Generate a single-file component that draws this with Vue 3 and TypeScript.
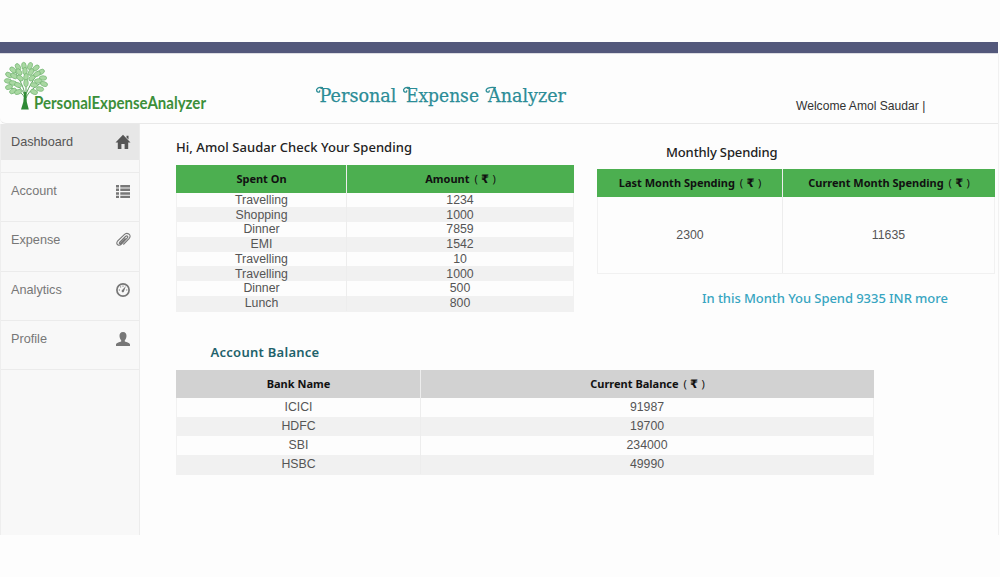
<script setup lang="ts">
interface Row {
  name: string
  value: number
}

const menu: { label: string; icon: string }[] = [
  { label: 'Dashboard', icon: 'home' },
  { label: 'Account', icon: 'list' },
  { label: 'Expense', icon: 'clip' },
  { label: 'Analytics', icon: 'gauge' },
  { label: 'Profile', icon: 'user' },
]

const spending: Row[] = [
  { name: 'Travelling', value: 1234 },
  { name: 'Shopping', value: 1000 },
  { name: 'Dinner', value: 7859 },
  { name: 'EMI', value: 1542 },
  { name: 'Travelling', value: 10 },
  { name: 'Travelling', value: 1000 },
  { name: 'Dinner', value: 500 },
  { name: 'Lunch', value: 800 },
]

const balances: Row[] = [
  { name: 'ICICI', value: 91987 },
  { name: 'HDFC', value: 19700 },
  { name: 'SBI', value: 234000 },
  { name: 'HSBC', value: 49990 },
]

// Leaves of the logo tree: x, y, rotation
const leaves: number[][] = [
  [8, 23, 10], [9, 17, 30], [13, 12, 40], [18, 9, 60], [24, 8, 80], [30, 8, 110], [36, 10, 140],
  [41, 14, 150], [43, 20, 0], [44, 26, 20], [40, 31, 10], [9, 29, 160], [13, 33, 150], [14, 18, 30],
  [13, 25, 10], [19, 14, 50], [20, 20, 40], [25, 13, 90], [26, 19, 100], [31, 14, 120], [32, 20, 140],
  [37, 16, 150], [38, 23, 170], [34, 27, 10], [18, 27, 20], [34, 34, 20], [18, 34, 160], [26, 25, 90],
]
</script>

<template>
  <div class="page">
    <div class="topbar"></div>
    <div class="app">
      <header class="header">
        <svg class="logo" width="260" height="62" viewBox="0 0 260 62">
          <g fill="none" stroke="#5aa35a" stroke-width="1">
            <path d="M25 40C24 30 16 28 11 24M25 38C24 28 19 22 15 13M26 38V10M26 36C29 28 34 22 38 13M26 40C29 32 36 29 42 24M25 40C21 33 16 32 11 30" />
          </g>
          <g fill="#a9d8a2" stroke="#6cb06c" stroke-width="0.6">
            <ellipse v-for="(l, i) in leaves" :key="i" :cx="l[0]" :cy="l[1]" rx="3.7" ry="2.3" :transform="`rotate(${l[2]} ${l[0]} ${l[1]})`" />
          </g>
          <path d="M24.200 34H26.200L26.800 44L28.800 51.500H21L23.300 44Z" fill="#2f8a35" />
          <text x="34" y="51" textLength="172" lengthAdjust="spacingAndGlyphs" class="logo-text">PersonalExpenseAnalyzer</text>
        </svg>
        <svg class="title" width="260" height="34" viewBox="0 0 260 34">
          <text x="5.500" y="22.500" textLength="77" lengthAdjust="spacingAndGlyphs">Personal</text>
          <text x="92" y="22.500" textLength="73" lengthAdjust="spacingAndGlyphs">Expense</text>
          <text x="174" y="22.500" textLength="78" lengthAdjust="spacingAndGlyphs">Analyzer</text>
          <g class="swash">
            <path d="M9 8.700C4 7.500 1.800 10 2.800 12.100C3.800 14.100 6.500 13 5.500 11.300" />
            <path d="M96 8.700C91 7.500 88.800 10 89.800 12.100C90.800 14.100 93.500 13 92.500 11.300" />
            <path d="M182 8.700C175 7.500 171.300 10 172.300 12.100C173.300 14.100 176 13 175 11.300" />
          </g>
        </svg>
        <div class="welcome">Welcome Amol Saudar |</div>
      </header>

      <div class="body">
        <nav class="sidebar">
          <a v-for="(m, i) in menu" :key="m.label" class="item" :class="{ active: i === 0 }">
            <span class="item-row">
              <span>{{ m.label }}</span>
              <svg v-if="m.icon === 'home'" class="icon" viewBox="0 0 16 16"><path d="M8 .8L15.500 8.600H13.200V15H9.600V10H6.400V15H2.800V8.600H.5L8 .8ZM11.500 1.800H13.500V5.500L11.500 3.400Z" /></svg>
              <svg v-else-if="m.icon === 'list'" class="icon" viewBox="0 0 16 16"><path d="M1 2H4V4.500H1ZM5.300 2H15V4.500H5.300ZM1 5.600H4V8.100H1ZM5.300 5.600H15V8.100H5.300ZM1 9.200H4V11.700H1ZM5.300 9.200H15V11.700H5.300ZM1 12.800H4V15H1ZM5.300 12.800H15V15H5.300Z" /></svg>
              <svg v-else-if="m.icon === 'clip'" class="icon" viewBox="0 0 16 16"><path class="line thin" d="M4.500 10.500L10.500 4.500C12 3 13.500 4.500 12.300 6L6.500 12C3.800 14.700.3 12.300 2.500 9.200L9 2.800C12-.2 17 2.500 14.300 6.300L8.300 12.500M4.500 10.500C3.800 11.500 5 12 5.700 11.200L10.500 6.300" /></svg>
              <svg v-else-if="m.icon === 'gauge'" class="icon" viewBox="0 0 16 16"><circle class="line" cx="8" cy="8" r="6.100" /><path d="M10.900 4L9 9.200A1.200 1.200 0 1 1 7.200 8.100ZM3.800 7.500H5V8.500H3.800ZM4.900 4.800L5.700 4.200L6.400 5L5.600 5.700ZM7.500 3.500H8.500V4.700H7.500ZM11.200 7.500H12.300V8.500H11.200Z" /></svg>
              <svg v-else class="icon" viewBox="0 0 16 16"><path d="M8 1C10.500 1 11.600 2.700 11.500 5C11.400 7 10.700 8.300 9.800 9.200V10.600C11.500 11.300 15 12 15 13.500V15H1V13.500C1 12 4.500 11.300 6.200 10.600V9.200C5.300 8.300 4.600 7 4.500 5C4.400 2.700 5.500 1 8 1Z" /></svg>
            </span>
          </a>
        </nav>

        <main class="main">
          <div class="top">
            <section class="spent">
              <h2 class="h-spent">Hi, Amol Saudar Check Your Spending</h2>
              <div class="table t-spent">
                <div class="tr th"><div>Spent On</div><div>Amount <i>( <b>₹</b> )</i></div></div>
                <div v-for="(r, i) in spending" :key="i" class="tr"><div>{{ r.name }}</div><div>{{ r.value }}</div></div>
              </div>
            </section>
            <section class="monthly">
              <h2 class="h-month">Monthly Spending</h2>
              <div class="table t-month">
                <div class="tr th"><div>Last Month Spending <i>( <b>₹</b> )</i></div><div>Current Month Spending <i>( <b>₹</b> )</i></div></div>
                <div class="tr"><div>2300</div><div>11635</div></div>
              </div>
              <p class="note">In this Month You Spend 9335 INR more</p>
            </section>
          </div>
          <section>
            <h2 class="h-bal">Account Balance</h2>
            <div class="table t-bal">
              <div class="tr th"><div>Bank Name</div><div>Current Balance <i>( <b>₹</b> )</i></div></div>
              <div v-for="r in balances" :key="r.name" class="tr"><div>{{ r.name }}</div><div>{{ r.value }}</div></div>
            </div>
          </section>
        </main>
      </div>
    </div>
  </div>
</template>

<style>
body {
  background: #fdfdfd;
}
</style>

<style scoped>
.page {
  box-sizing: border-box;
  width: 1000px;
  height: 577px;
  padding-top: 42px;
  overflow: hidden;
  font-family: "Liberation Sans", Arial, sans-serif;
}
.topbar {
  width: 998px;
  height: 11px;
  background: #53587b;
  border-bottom: 1px solid #dcdce2;
}
.app {
  width: 998px;
  height: 481px;
  border-right: 1px solid #f1f1f1;
}
.header {
  box-sizing: border-box;
  display: flex;
  align-items: flex-start;
  height: 70px;
  padding-top: 4px;
  border-bottom: 1px solid #e9e9e9;
  border-bottom-left-radius: 6px;
}
.logo {
  flex: none;
}
.logo-text {
  font: 700 16.500px Lato, sans-serif;
  fill: #3c8f3a;
}
.title {
  flex: none;
  margin: 21px 0 0 54px;
  font: 19px "DejaVu Serif", serif;
  fill: #2b8c96;
  stroke: #2b8c96;
  stroke-width: 0.250;
}
.swash {
  fill: none;
  stroke-width: 1.300;
}
.welcome {
  margin: 41px 0 0 222px;
  font-size: 12.100px;
  line-height: 14px;
  color: #333;
  white-space: nowrap;
}
.body {
  display: flex;
  height: 411px;
}
.sidebar {
  box-sizing: border-box;
  flex: none;
  width: 140px;
  background: #f8f8f8;
  border-left: 1px solid #eee;
  border-right: 1px solid #ececec;
}
.item {
  display: block;
  box-sizing: border-box;
  height: 49.200px;
  border-bottom: 1px solid #ebebeb;
  color: #777;
  font-size: 12.700px;
}
.item-row {
  display: flex;
  align-items: center;
  justify-content: space-between;
  height: 36px;
  padding: 0 8.500px 0 10px;
}
.active .item-row {
  background: #e7e7e7;
  color: #555;
}
.icon {
  width: 16px;
  height: 16px;
  fill: currentColor;
}
.icon .line {
  fill: none;
  stroke: currentColor;
  stroke-width: 1.700;
}
.icon .thin {
  stroke-width: 1.100;
}
.main {
  padding-left: 36px;
}
.top {
  display: flex;
  gap: 23px;
  height: 219px;
}
h2,
.note {
  margin: 0;
  font-family: "Noto Sans", sans-serif;
  font-weight: 500;
  font-size: 13px;
  line-height: 18px;
  color: #222;
  white-space: nowrap;
}
.h-spent {
  padding: 14px 0 9px;
  letter-spacing: 0.050px;
}
.h-month {
  padding: 19px 0 8px 69px;
  letter-spacing: -0.130px;
}
.note {
  padding: 15px 0 0 105px;
  color: #37a5c1;
  letter-spacing: -0.060px;
}
.h-bal {
  padding: 0 0 9px 34.500px;
  font-weight: 600;
  color: #1f626b;
  letter-spacing: 0.270px;
}
.table {
  box-sizing: border-box;
  border: 1px solid #f1f1f1;
  border-top: 0;
}
.tr {
  display: grid;
  font-size: 12.300px;
  color: #555;
  text-align: center;
}
.tr > div {
  display: flex;
  align-items: center;
  justify-content: center;
  white-space: pre;
}
.tr > div + div {
  border-left: 1px solid #ededed;
}
.tr:nth-child(odd):not(.th) {
  background: #f1f1f1;
}
.th {
  height: 27.500px;
  margin: 0 -1px;
  padding-left: 1px;
  background: #4caf50;
  font-family: "Noto Sans", sans-serif;
  font-weight: 700;
  font-size: 11px;
  color: #111;
}
.th i {
  padding-left: 2px;
  font-style: normal;
  font-weight: 400;
  word-spacing: 0.500px;
}
.th b {
  font-family: "DejaVu Sans", sans-serif;
  font-size: 11.500px;
}
.t-spent {
  width: 398px;
}
.t-spent .tr {
  grid-template-columns: 169px 1fr;
}
.t-spent .tr:not(.th) {
  height: 14.750px;
}
.t-month {
  width: 398px;
}
.t-month .tr {
  grid-template-columns: 184px 1fr;
}
.t-month .tr:not(.th) {
  height: 76px;
}
.t-bal {
  width: 698px;
}
.t-bal .tr {
  grid-template-columns: 243px 1fr;
}
.t-bal .tr:not(.th) {
  height: 19px;
}
.t-bal .th {
  background: #d2d2d2;
}
</style>
